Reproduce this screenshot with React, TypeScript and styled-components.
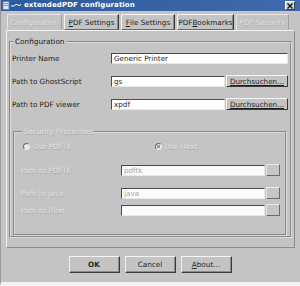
import React from "react";
import styled, { createGlobalStyle, css } from "styled-components";

const GlobalStyle = createGlobalStyle`
  html, body {
    margin: 0;
    padding: 0;
    background: #c4c4c4;
  }
  * {
    box-sizing: border-box;
  }
`;

const BG = "#c4c4c4";
const DISABLED = "#e2e2e2";

const Window = styled.div`
  width: 300px;
  height: 286px;
  display: flex;
  flex-direction: column;
  background: ${BG};
  font-family: "DejaVu Sans", "Liberation Sans", sans-serif;
  font-size: 7px;
  color: #222;
  border-left: 1px solid #9a9a9a;
  border-bottom: 4px solid #f2f2f2;
`;

const TitleBar = styled.div`
  height: 11px;
  display: flex;
  align-items: center;
  gap: 2px;
  padding: 0 5px 0 1px;
  background: linear-gradient(to right, #2c5a9e, #3f6bad);
  color: #fff;
  font-weight: bold;
  font-size: 7px;
  letter-spacing: 0.1px;
`;

const TitleText = styled.span`
  flex: 1;
  line-height: 11px;
`;

const CloseBox = styled.div`
  width: 10px;
  height: 9px;
  display: flex;
  align-items: center;
  justify-content: center;
  background: #d4d4d4;
  border: 1px solid;
  border-color: #fff #444 #444 #fff;
`;

const TabRow = styled.div`
  display: flex;
  align-items: flex-end;
  gap: 2px;
  height: 19px;
  padding: 2px 0 0 6px;
`;

const Tab = styled.div<{ $w: number; $disabled?: boolean }>`
  width: ${(p) => p.$w}px;
  height: 16px;
  display: flex;
  align-items: center;
  justify-content: center;
  white-space: nowrap;
  font-size: 7.2px;
  border: 1px solid;
  ${(p) =>
    p.$disabled
      ? css`
          color: ${DISABLED};
          text-shadow: 0.5px 0.5px 0 #a9a9a9;
          border-color: #e6e6e6 #a0a0a0 #c4c4c4 #e6e6e6;
        `
      : css`
          color: #1e1e1e;
          border-color: #f4f4f4 #3a3a3a #6a6a6a #f4f4f4;
          box-shadow: inset -1px 0 0 #8a8a8a;
        `}
`;

const Panel = styled.div`
  margin: 0 5px 0 5px;
  height: 218px;
  padding: 6px 2px 2px 2px;
  border: 1px solid;
  border-color: #f2f2f2 #8a8a8a #8a8a8a #f2f2f2;
`;

const Group = styled.fieldset<{ $disabled?: boolean }>`
  margin: 0;
  padding: 6px 2px 0 1px;
  border: 2px groove #dcdcdc;
  min-width: 0;
  ${(p) =>
    p.$disabled &&
    css`
      margin: 17px 1px 0 1px;
      padding: 5px 5px 0 6px;
      height: 109px;
    `}
`;

const Legend = styled.legend<{ $disabled?: boolean }>`
  padding: 0 2px;
  margin-left: 1px;
  font-size: 7.3px;
  line-height: 9px;
  color: ${(p) => (p.$disabled ? DISABLED : "#1e1e1e")};
  ${(p) =>
    p.$disabled &&
    css`
      text-shadow: 0.5px 0.5px 0 #a9a9a9;
    `}
`;

const Rows = styled.div<{ $gap: number }>`
  display: flex;
  flex-direction: column;
  gap: ${(p) => p.$gap}px;
`;

const Row = styled.div<{ $label: number; $pull?: number }>`
  display: grid;
  grid-template-columns: ${(p) => p.$label}px 1fr auto;
  align-items: center;
  height: 12px;
  margin-top: ${(p) => (p.$pull ? `-${p.$pull}px` : "0")};
`;

const Label = styled.span<{ $disabled?: boolean }>`
  font-size: 7.2px;
  white-space: nowrap;
  color: ${(p) => (p.$disabled ? DISABLED : "#1e1e1e")};
  ${(p) =>
    p.$disabled &&
    css`
      text-shadow: 0.5px 0.5px 0 #a9a9a9;
    `}
`;

const Field = styled.div<{ $span?: boolean; $disabled?: boolean }>`
  ${(p) => p.$span && "grid-column: 2 / 4;"}
  height: 11px;
  display: flex;
  align-items: center;
  padding-left: 2px;
  background: ${(p) => (p.$disabled ? "#fbfbfb" : "#ffffff")};
  border: 1px solid;
  border-color: #4a4a4a #e8e8e8 #e8e8e8 #4a4a4a;
  color: ${(p) => (p.$disabled ? "#a8a8a8" : "#1e1e1e")};
  font-size: 7.2px;
  white-space: nowrap;
  overflow: hidden;
`;

const Browse = styled.div`
  width: 62px;
  height: 12px;
  margin-left: 1px;
  display: flex;
  align-items: center;
  justify-content: center;
  font-size: 7.2px;
  color: #1e1e1e;
  text-decoration: underline;
  text-decoration-thickness: 0.5px;
  text-underline-offset: 1px;
  border: 1px solid;
  border-color: #f4f4f4 #3a3a3a #3a3a3a #f4f4f4;
`;

const MiniButton = styled.div`
  width: 14px;
  height: 12px;
  margin-left: 1px;
  background: #c6c6c6;
  border: 1px solid;
  border-color: #e8e8e8 #6a6a6a #6a6a6a #e8e8e8;
`;

const RadioRow = styled.div`
  display: flex;
  align-items: center;
  height: 9px;
  margin: 1px 0 13px 2px;
`;

const RadioItem = styled.div<{ $w?: number }>`
  display: flex;
  align-items: center;
  gap: 3px;
  width: ${(p) => (p.$w ? `${p.$w}px` : "auto")};
`;

const RadioDot = styled.span<{ $on?: boolean }>`
  width: 7px;
  height: 7px;
  border-radius: 50%;
  background: ${(p) => (p.$on ? "radial-gradient(circle, #9a9a9a 0 1.5px, #e8e8e8 2px)" : "#e8e8e8")};
  border: 1px solid;
  border-color: #6a6a6a #e8e8e8 #e8e8e8 #6a6a6a;
`;

const Footer = styled.div`
  flex: 1;
  display: flex;
  justify-content: center;
  align-items: flex-start;
  gap: 5px;
  padding-top: 8px;
  padding-right: 1px;
`;

const DialogButton = styled.div<{ $bold?: boolean }>`
  width: 51px;
  height: 17px;
  display: flex;
  align-items: center;
  justify-content: center;
  font-size: 7.3px;
  font-weight: ${(p) => (p.$bold ? "bold" : "normal")};
  color: #2a2a2a;
  border: 1px solid;
  border-color: #f4f4f4 #3a3a3a #3a3a3a #f4f4f4;
  box-shadow: inset -1px -1px 0 #8a8a8a;
`;

const AppIcon = () => (
  <svg width="20" height="9" viewBox="0 0 20 9">
    <rect x="1" y="0.5" width="6" height="8" fill="#e8ecf8" stroke="#6a7ab8" strokeWidth="1" />
    <rect x="2" y="2" width="4" height="1" fill="#8090d0" />
    <rect x="2" y="4" width="4" height="1" fill="#8090d0" />
    <path d="M9 5 H12 M12 5 Q14 2 16 4 T19 3" stroke="#fff" strokeWidth="1" fill="none" />
  </svg>
);

const CloseIcon = () => (
  <svg width="6" height="6" viewBox="0 0 6 6">
    <path d="M0.5 0.5 L5.5 5.5 M5.5 0.5 L0.5 5.5" stroke="#111" strokeWidth="1.4" />
  </svg>
);

export default function App() {
  return (
    <>
      <GlobalStyle />
      <Window>
        <TitleBar>
          <AppIcon />
          <TitleText>extendedPDF configuration</TitleText>
          <CloseBox>
            <CloseIcon />
          </CloseBox>
        </TitleBar>

        <TabRow>
          <Tab $w={55} $disabled>Configuration</Tab>
          <Tab $w={55}>
            <u>P</u>DF Settings
          </Tab>
          <Tab $w={54}>
            <u>F</u>ile Settings
          </Tab>
          <Tab $w={57}>
            PDF <u>B</u>ookmarks
          </Tab>
          <Tab $w={53} $disabled>PDF Security</Tab>
        </TabRow>

        <Panel>
          <Group>
            <Legend>Configuration</Legend>
            <Rows $gap={11}>
              <Row $label={99}>
                <Label>Printer Name</Label>
                <Field $span>Generic Printer</Field>
              </Row>
              <Row $label={99}>
                <Label>Path to GhostScript</Label>
                <Field>gs</Field>
                <Browse>Durchsuchen...</Browse>
              </Row>
              <Row $label={99}>
                <Label>Path to PDF viewer</Label>
                <Field>xpdf</Field>
                <Browse>Durchsuchen...</Browse>
              </Row>
            </Rows>

            <Group $disabled>
              <Legend $disabled>Security Processes</Legend>
              <RadioRow>
                <RadioItem $w={132}>
                  <RadioDot />
                  <Label $disabled>Use PDFTK</Label>
                </RadioItem>
                <RadioItem>
                  <RadioDot $on />
                  <Label $disabled>Use iText</Label>
                </RadioItem>
              </RadioRow>
              <Rows $gap={11}>
                <Row $label={100}>
                  <Label $disabled>Path to PDFTK</Label>
                  <Field $disabled>pdftk</Field>
                  <MiniButton />
                </Row>
                <Row $label={100}>
                  <Label $disabled>Path to java</Label>
                  <Field $disabled>java</Field>
                  <MiniButton />
                </Row>
                <Row $label={100} $pull={6}>
                  <Label $disabled>Path to iText</Label>
                  <Field $disabled />
                  <MiniButton />
                </Row>
              </Rows>
            </Group>
          </Group>
        </Panel>

        <Footer>
          <DialogButton $bold>OK</DialogButton>
          <DialogButton>Cancel</DialogButton>
          <DialogButton>
            <u>A</u>bout...
          </DialogButton>
        </Footer>
      </Window>
    </>
  );
}
